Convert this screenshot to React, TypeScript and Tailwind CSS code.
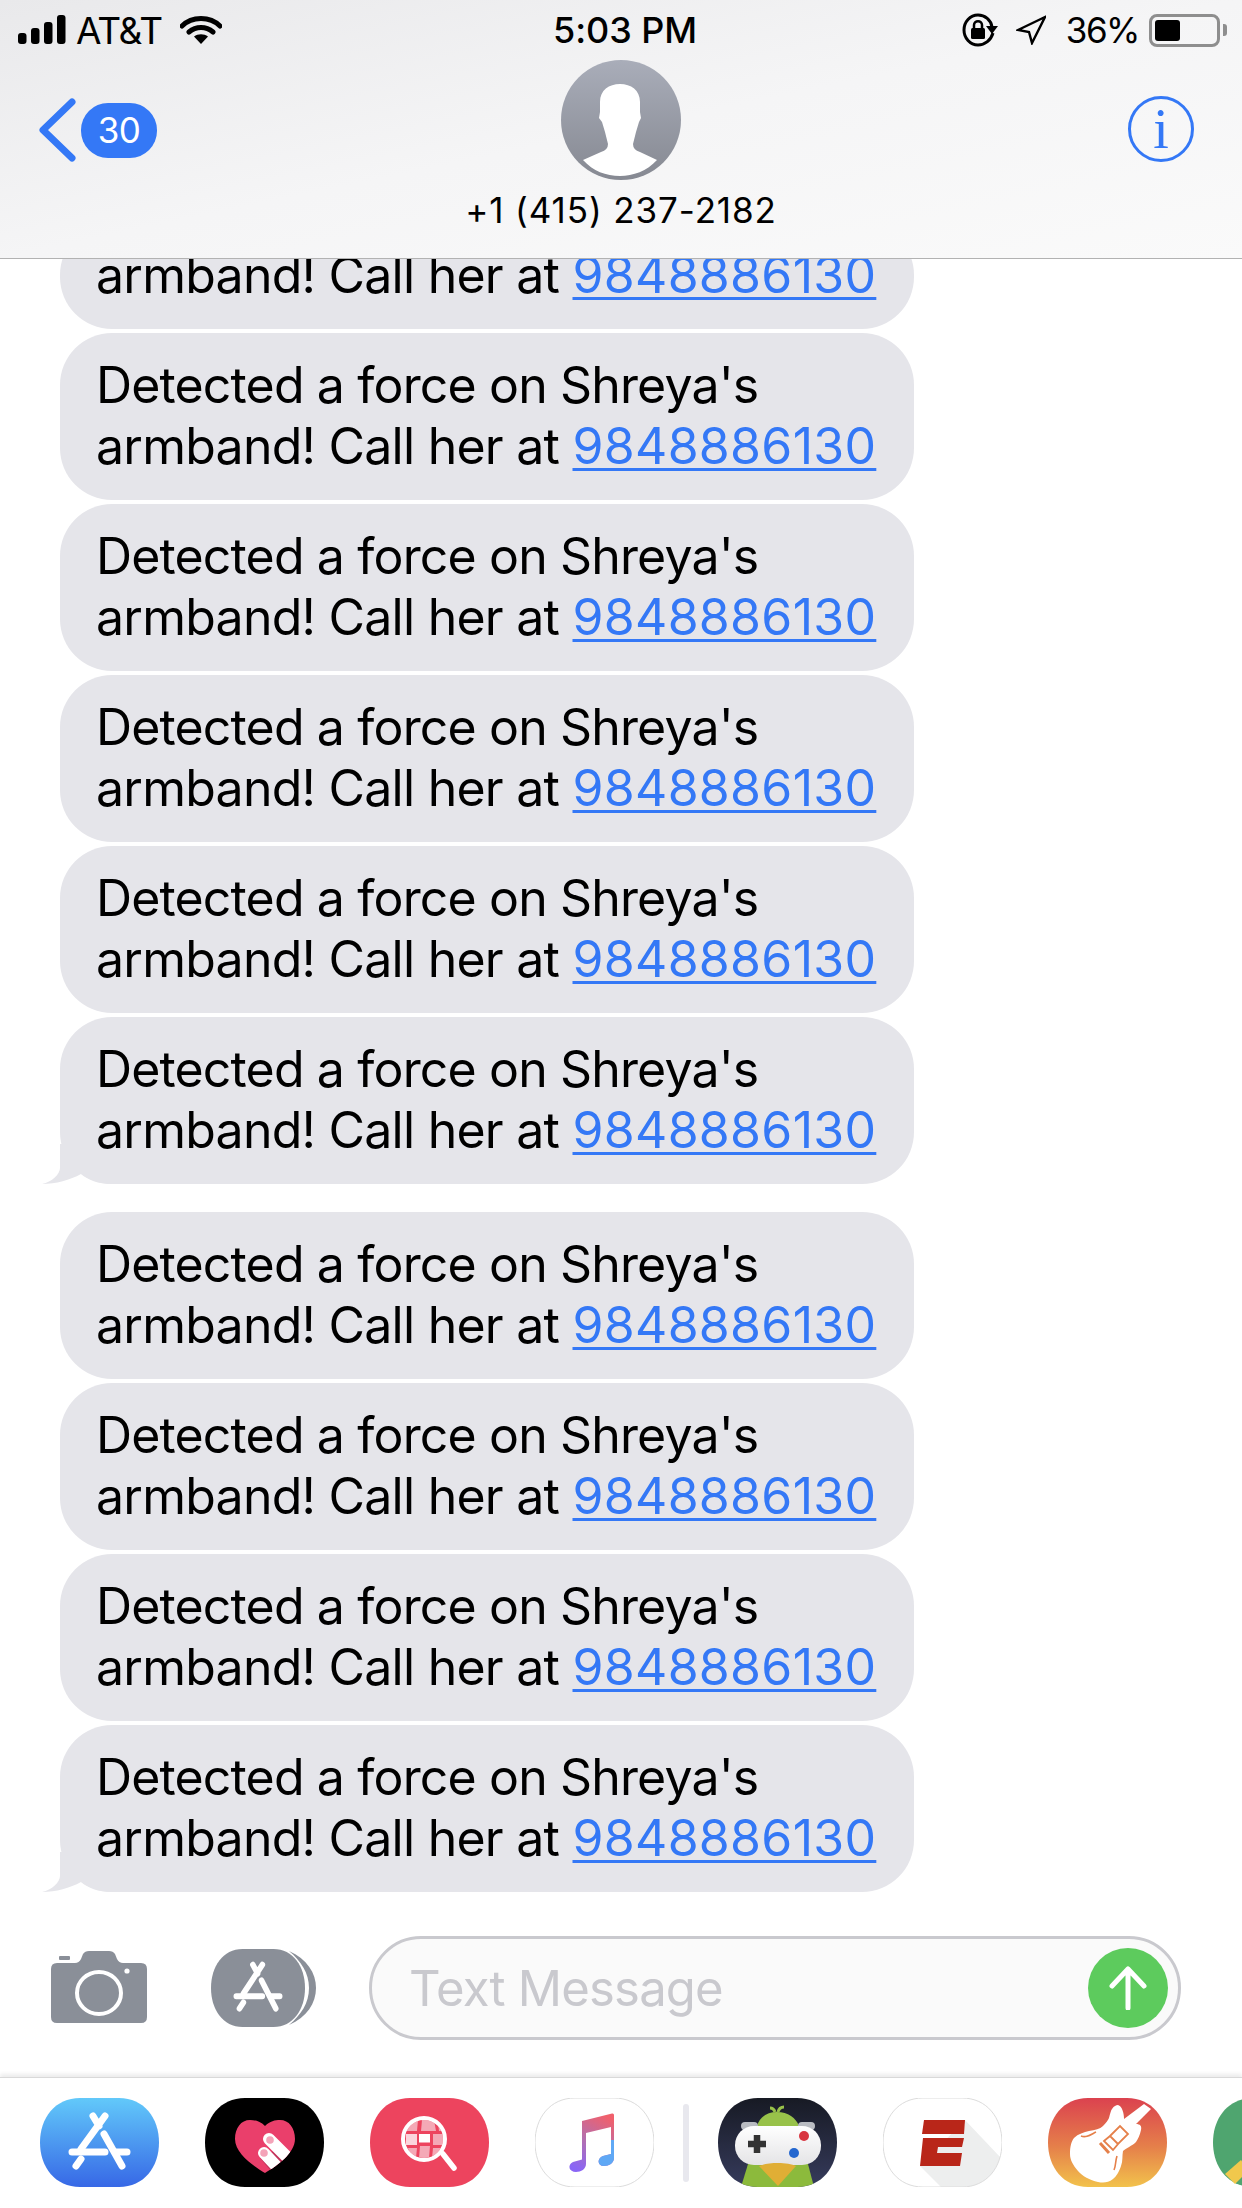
import React from "react";

const SQUIRCLE = "M40 0H79C104 0 119 20 119 44.5C119 69 104 89 79 89H40C15 89 0 69 0 44.5C0 20 15 0 40 0Z";

// cut = the bubble that has scrolled under the header, only its last line shows
const Bubble = ({ tail, cut }: { tail?: boolean; cut?: boolean }) => (
  <div className="relative w-[854px] rounded-[52px] bg-[#e5e5ea] pb-[23px] pl-[36px] pt-[22px] text-[50px] leading-[61px] text-black">
    {tail && (
      <svg className="absolute -left-[18px] bottom-0" width="70" height="40" viewBox="0 0 70 40">
        <path d="M18 0V24C18 30 10 38 0 40C14 40 28 36 39 30C46 36 56 40 70 40V0Z" fill="#e5e5ea" />
      </svg>
    )}
    {!cut && <div className="relative tracking-[-0.85px]">Detected a force on Shreya's</div>}
    <div className="relative tracking-[-0.75px]">
      armband! Call her at{" "}
      <span className="tracking-[0.3px] text-[#3478f6] underline decoration-[3px] underline-offset-[4px]">9848886130</span>
    </div>
  </div>
);

const AppGlyph = () => (
  <g stroke="#fff" strokeWidth="7" strokeLinecap="round" fill="none">
    <path d="M65 18L41 51M41 61L36 68M53 18L59 28M64 36L82 68" />
    <path d="M32 54H65M75 54H87" />
  </g>
);

const AppStoreIcon = () => (
  <svg width="119" height="89" viewBox="0 0 119 89" className="shrink-0">
    <defs>
      <linearGradient id="storeBg" x1="0" y1="0" x2="0" y2="1">
        <stop offset="0" stopColor="#62c9fa" />
        <stop offset="1" stopColor="#3768e6" />
      </linearGradient>
    </defs>
    <path d={SQUIRCLE} fill="url(#storeBg)" />
    <AppGlyph />
  </svg>
);

const HeartIcon = () => (
  <svg width="119" height="89" viewBox="0 0 119 89" className="shrink-0">
    <defs>
      <clipPath id="heartClip">
        <path d="M60 28C55 23 50 22 45 22C36 22 30 30 30 41C30 55 48 68 60 75C72 68 90 55 90 41C90 30 84 22 75 22C70 22 65 23 60 28Z" />
      </clipPath>
    </defs>
    <path d={SQUIRCLE} fill="#000" />
    <g clipPath="url(#heartClip)">
      <rect x="28" y="20" width="64" height="58" fill="#ea3f6b" />
      <path d="M55 60L70 78L85 70L70 52Z" fill="#c2325a" />
      <path d="M64 41L86 63M59 55L76 73" stroke="#fff" strokeWidth="12" strokeLinecap="round" />
    </g>
    <circle cx="65" cy="42" r="3.8" fill="#f4a3b8" />
    <circle cx="59" cy="55" r="3.8" fill="#f4a3b8" />
  </svg>
);

const SearchIcon = () => (
  <svg width="119" height="89" viewBox="0 0 119 89" className="shrink-0">
    <defs>
      <clipPath id="lensClip">
        <circle cx="54" cy="41" r="19" />
      </clipPath>
    </defs>
    <path d={SQUIRCLE} fill="#ed445e" />
    <g clipPath="url(#lensClip)">
      <path d="M36 22L48 22L47 33L36 33ZM52 22L64 22L66 33L51 33ZM68 24L74 33L69 33Z" fill="#f4a9b6" />
      <rect x="36" y="36" width="11" height="11" fill="#fbd5dc" />
      <rect x="49" y="36" width="11" height="8.5" fill="#fff" />
      <rect x="63" y="36" width="12" height="11" fill="#f4a9b6" />
      <path d="M38 50H47L46 60H40ZM50 48H60L59 60H49ZM63 50H72L66 60H62Z" fill="#f4a9b6" />
    </g>
    <circle cx="54" cy="41" r="21" fill="none" stroke="#fff" strokeWidth="4" />
    <path d="M73 56L84 70" stroke="#fff" strokeWidth="5.5" strokeLinecap="round" />
  </svg>
);

const MusicIcon = () => (
  <svg width="119" height="89" viewBox="0 0 119 89" className="shrink-0">
    <defs>
      <linearGradient id="noteBg" x1="0.7" y1="0" x2="0.3" y2="1">
        <stop offset="0" stopColor="#f0606c" />
        <stop offset="0.5" stopColor="#b46fae" />
        <stop offset="1" stopColor="#8a66f5" />
      </linearGradient>
    </defs>
    <path d={SQUIRCLE} fill="#fff" stroke="#dcdcdc" strokeWidth="1" />
    <path
      d="M47 23L77 15.5Q79 15 79 17V60C79 65 74 68 69 68C62 68 62 60 68 58L76 56V29L51 35V66C51 71 46 74 41 74C34 74 32 67 38 64L47 61.5Z"
      fill="url(#noteBg)"
    />
    <path d="M79 42V60C79 65 74 68 69 68C62 68 62 60 68 58L76 56V42Z" fill="#5fa8f5" />
  </svg>
);

const GameIcon = () => (
  <svg width="119" height="89" viewBox="0 0 119 89" className="shrink-0">
    <defs>
      <linearGradient id="gameBg" x1="0" y1="0" x2="0" y2="1">
        <stop offset="0" stopColor="#171a24" />
        <stop offset="1" stopColor="#363b5c" />
      </linearGradient>
      <linearGradient id="padBg" x1="0" y1="0" x2="0" y2="1">
        <stop offset="0" stopColor="#ffffff" />
        <stop offset="1" stopColor="#e4e4e6" />
      </linearGradient>
      <clipPath id="gameClip">
        <path d={SQUIRCLE} />
      </clipPath>
    </defs>
    <path d={SQUIRCLE} fill="url(#gameBg)" />
    <g clipPath="url(#gameClip)">
      <path d="M23 89L30 66H90L96 89Z" fill="#8cba3c" />
      <path d="M39 28C42 18 50 14 59 14C70 14 78 20 81 28Z" fill="#98c24a" />
      <path d="M57 14C56 11 54 10 52 10M60 14C61 10 63 9 66 9" stroke="#98c24a" strokeWidth="3" fill="none" />
      <rect x="23" y="24" width="17" height="8" rx="4" fill="#b9bcc2" />
      <rect x="80" y="24" width="17" height="8" rx="4" fill="#b9bcc2" />
      <rect x="17" y="28" width="86" height="39" rx="19" fill="url(#padBg)" />
      <path d="M41 68C50 64 70 64 78 68L60 88Z" fill="#e0ae35" />
    </g>
    <path d="M39 37V55M30 46H48" stroke="#333" strokeWidth="6.5" />
    <circle cx="86" cy="38" r="5" fill="#d8343f" />
    <circle cx="76" cy="55" r="5" fill="#2467cf" />
  </svg>
);

const EspnIcon = () => (
  <svg width="119" height="89" viewBox="0 0 119 89" className="shrink-0">
    <defs>
      <clipPath id="espnClip">
        <path d={SQUIRCLE} />
      </clipPath>
    </defs>
    <path d={SQUIRCLE} fill="#fff" />
    <path d="M82 22L118 60V89H58L37 68Z" fill="#edeeee" clipPath="url(#espnClip)" />
    <path d={SQUIRCLE} fill="none" stroke="#dcdcdc" strokeWidth="1" />
    <path d="M41 22H82L81 36H39Z" fill="#b92619" />
    <path d="M40 40H81L79 49H55L54 55H79L77 68H37Z" fill="#b92619" />
  </svg>
);

const GarageBandIcon = () => (
  <svg width="119" height="89" viewBox="0 0 119 89" className="shrink-0">
    <defs>
      <linearGradient id="gbBg" x1="0" y1="0" x2="0" y2="1">
        <stop offset="0" stopColor="#db424f" />
        <stop offset="0.55" stopColor="#e5804a" />
        <stop offset="1" stopColor="#f2c24c" />
      </linearGradient>
    </defs>
    <path d={SQUIRCLE} fill="url(#gbBg)" />
    <path
      d="M70 7C74 8 76 15 76 21L96 6L103 11L88 26C92 26 94 28 93 32C92 37 90 41 88 44C84 48 78 50 75 53C74 58 75 63 73 68C71 74 68 79 65 81C60 85 55 85 50 84C42 82 34 78 30 73C25 67 22 62 22 56C22 49 23 44 26 40C30 36 36 34 41 33C47 32 52 31 55 28C58 25 60 22 61 20C62 16 63 12 64 11C66 8 68 7 70 7Z"
      fill="#fff"
    />
    <path d="M33 38C38 40 42 37 48 34M69 58C67 64 68 68 66 72" stroke="#e5804a" strokeWidth="1.6" fill="none" />
    <path d="M52 45L61 55" stroke="#e5804a" strokeWidth="3" />
    <path d="M62 38L72 28L80 36L70 46ZM56 43L62 38L70 46L65 52Z" fill="none" stroke="#e5804a" strokeWidth="1.8" />
  </svg>
);

const MapsIcon = () => (
  <svg width="119" height="89" viewBox="0 0 119 89" className="shrink-0">
    <path d={SQUIRCLE} fill="#4fa56f" />
    <path d="M12 76L28 62L36 72L22 86Z" fill="#f1c84c" />
  </svg>
);

const StatusBar = () => (
  <div className="grid h-[60px] grid-cols-3 items-center font-['Inter',sans-serif] text-black">
    <div className="flex items-center pl-[18px]">
      <svg width="48" height="30" viewBox="0 0 48 30">
        <rect x="0" y="18" width="8.5" height="11" rx="3" />
        <rect x="13" y="13" width="8.5" height="16" rx="3" />
        <rect x="26" y="7" width="8.5" height="22" rx="3" />
        <rect x="39" y="0" width="8.5" height="29" rx="3" />
      </svg>
      <span className="ml-[10px] text-[37px] leading-none tracking-[-1.2px]">AT&amp;T</span>
      <svg className="ml-[18px]" width="42" height="30" viewBox="0 0 42 30">
        <path d="M2 11C12 1 30 1 40 11M9 17C16 11 26 11 33 17" fill="none" stroke="#000" strokeWidth="5" strokeLinecap="round" />
        <path d="M14 21.5C18 18.5 24 18.5 28 21.5L21 29Z" />
      </svg>
    </div>
    <div className="pl-[8px] text-center text-[36px] font-medium leading-none tracking-[-0.1px]">5:03 PM</div>
    <div className="flex items-center justify-end pr-[15px]">
      <svg width="36" height="34" viewBox="0 0 36 34">
        <path d="M31 20C29 27 23 32 16 32C8 32 2 25 2 17C2 9 8 2 16 2C23 2 29 7 30 14" fill="none" stroke="#000" strokeWidth="3" />
        <path d="M24 13H36L30 21Z" />
        <rect x="9" y="15" width="14" height="11" rx="1.5" />
        <path d="M12 16V12C12 7 20 7 20 12V16" fill="none" stroke="#000" strokeWidth="2.5" />
      </svg>
      <svg className="ml-[18px]" width="30" height="30" viewBox="0 0 30 30">
        <path d="M2 15L29 2L16 28L13 17Z" fill="none" stroke="#000" strokeWidth="2.4" strokeLinejoin="miter" />
      </svg>
      <span className="ml-[20px] text-[35px] leading-none tracking-[-1.5px]">36%</span>
      <div className="ml-[10px] flex h-[33px] w-[71px] items-center rounded-[8px] border-[3px] border-[#8e8e8e] p-[3px]">
        <div className="h-full w-[25px] rounded-[3px] bg-black" />
      </div>
      <div className="ml-[3px] h-[12px] w-[4px] rounded-r-[3px] bg-[#8e8e8e]" />
    </div>
  </div>
);

const Avatar = () => (
  <svg width="120" height="120" viewBox="0 0 120 120">
    <defs>
      <linearGradient id="avatarBg" x1="0" y1="0" x2="0" y2="1">
        <stop offset="0" stopColor="#a9adb9" />
        <stop offset="1" stopColor="#868992" />
      </linearGradient>
    </defs>
    <circle cx="60" cy="60" r="60" fill="url(#avatarBg)" />
    <path
      d="M59 24C48 24 39 30 39 42V52L38 58L41 62L44 72L47 84Q47 90 40 92L22 100C32 111 45 116 59 116C72 116 86 111 96 100L79 92Q72 90 72 84L75 72L78 62L80 58L79 52V42C79 30 70 24 59 24Z"
      fill="#fff"
    />
  </svg>
);

const NavBar = () => (
  <div className="flex items-start justify-between">
    <div className="flex w-[300px] items-center pl-[38px] pt-[38px]">
      <svg width="40" height="64" viewBox="0 0 40 64">
        <path d="M34 4L5 32L34 60" fill="none" stroke="#3478f6" strokeWidth="7" strokeLinecap="round" strokeLinejoin="round" />
      </svg>
      <div className="ml-[3px] flex h-[55px] w-[76px] items-center justify-center rounded-[27px] bg-[#3478f6] text-[35px] tracking-[-0.5px] text-white">
        30
      </div>
    </div>
    <div className="flex flex-col items-center">
      <Avatar />
      <div className="mt-[11px] whitespace-nowrap text-[35px] leading-[38px] tracking-[0.9px] text-black">+1 (415) 237-2182</div>
    </div>
    <div className="flex w-[300px] justify-end pr-[48px] pt-[36px]">
      <div className="flex h-[66px] w-[66px] items-center justify-center rounded-full border-[3px] border-[#3478f6] font-['Liberation_Serif',serif] text-[56px] leading-none text-[#3478f6]">
        i
      </div>
    </div>
  </div>
);

const Composer = () => (
  <div className="mt-[44px] flex h-[104px] items-center pl-[51px]">
    <svg width="96" height="72" viewBox="0 0 96 72" className="-mt-[2px] shrink-0">
      <path
        d="M6 12H24Q28 12 30 8L32 3Q34 0 38 0H58Q62 0 64 3L66 8Q68 12 72 12H90Q96 12 96 18V66Q96 72 90 72H6Q0 72 0 66V18Q0 12 6 12Z"
        fill="#8a8f98"
      />
      <rect x="8" y="5" width="11" height="4" rx="1" fill="#8a8f98" />
      <ellipse cx="48" cy="42" rx="22" ry="21" fill="none" stroke="#fff" strokeWidth="4" />
      <circle cx="76" cy="20" r="2.6" fill="#fff" />
    </svg>
    <svg width="105" height="78" viewBox="0 0 105 78" className="ml-[64px] shrink-0">
      <g transform="scale(0.79 0.876)">
        <path d={SQUIRCLE} fill="#8a8f98" />
        <AppGlyph />
      </g>
      <path d="M78 2C96 10 105 24 105 39C105 54 96 68 78 76C90 66 98 54 98 39C98 24 90 12 78 2Z" fill="#8a8f98" />
    </svg>
    <div className="ml-[53px] flex h-[104px] w-[812px] items-center justify-between rounded-[52px] border-[3px] border-[#c9c9ce] bg-[#fafafa] pl-[37px] pr-[10px]">
      <span className="pt-[2px] text-[49px] tracking-[-0.8px] text-[#c9c9ce]">Text Message</span>
      <div className="flex h-[80px] w-[80px] items-center justify-center rounded-full bg-[#5dcb5d]">
        <svg width="40" height="44" viewBox="0 0 40 44">
          <path d="M20 42V3M4 20L20 3L36 20" fill="none" stroke="#fff" strokeWidth="5" strokeLinecap="round" strokeLinejoin="round" />
        </svg>
      </div>
    </div>
  </div>
);

const AppTray = () => (
  <div className="mt-[37px] flex h-[132px] gap-[46px] border-t border-[#d9d9d9] pl-[40px] pt-[20px] shadow-[0_-3px_4px_rgba(0,0,0,0.08)]">
    <AppStoreIcon />
    <HeartIcon />
    <SearchIcon />
    <MusicIcon />
    <div className="-mx-[17px] mt-[6px] h-[78px] w-[6px] shrink-0 rounded-full bg-[#e8e8ee]" />
    <GameIcon />
    <EspnIcon />
    <GarageBandIcon />
    <MapsIcon />
  </div>
);

const App = () => {
  const groups = [5, 4];

  return (
    <div className="h-[2208px] w-[1242px] overflow-hidden bg-white font-['Inter',sans-serif]">
      <header className="relative z-10 h-[259px] border-b border-[#b2b2b2] bg-gradient-to-br from-[#e9e9eb] via-[#f5f5f6] to-[#fafafa]">
        <StatusBar />
        <NavBar />
      </header>
      <div className="-mt-[36px] pl-[60px]">
        <div className="flex flex-col gap-[4px]">
          <Bubble cut />
          {Array.from({ length: groups[0] }).map((_, i) => (
            <Bubble key={i} tail={i === groups[0] - 1} />
          ))}
        </div>
        <div className="mt-[28px] flex flex-col gap-[4px]">
          {Array.from({ length: groups[1] }).map((_, i) => (
            <Bubble key={i} tail={i === groups[1] - 1} />
          ))}
        </div>
      </div>
      <Composer />
      <AppTray />
    </div>
  );
};

export default App;
